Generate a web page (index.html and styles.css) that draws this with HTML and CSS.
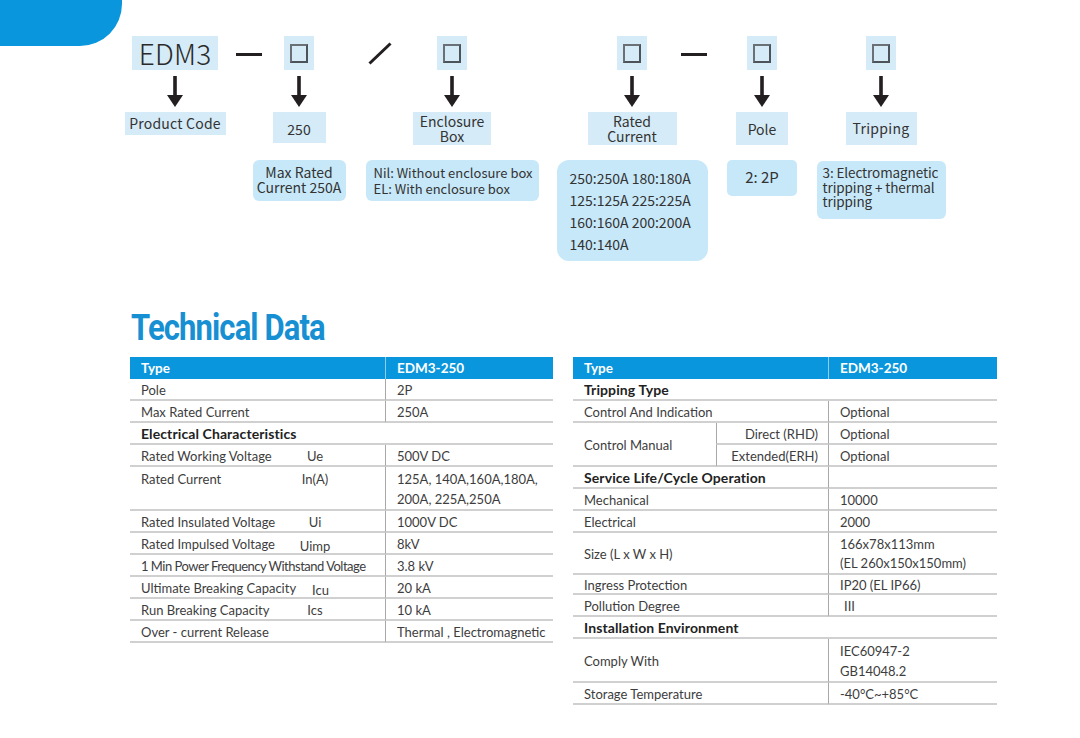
FILE: index.html
```html
<!DOCTYPE html>
<html lang="en">
<head>
<meta charset="utf-8">
<title>EDM3 Technical Data</title>
<link rel="stylesheet" href="styles.css">
</head>
<body>
<div class="page">
  <div class="corner"></div>

  <section class="code">
    <div class="node c1">
      <div class="seg seg-text">EDM3</div>
      <svg class="arrow" viewBox="0 0 16 31"><rect x="6.2" y="0" width="3.6" height="21"/><polygon points="0,19 16,19 8,31"/></svg>
      <div class="label-area"><div class="label l-code">Product Code</div></div>
    </div>
    <div class="sep s1"><span class="dash"></span></div>
    <div class="node c2">
      <div class="seg"><span class="sq"></span></div>
      <svg class="arrow" viewBox="0 0 16 31"><rect x="6.2" y="0" width="3.6" height="21"/><polygon points="0,19 16,19 8,31"/></svg>
      <div class="label-area"><div class="label l-250">250</div></div>
      <div class="desc d-max">Max Rated<br>Current 250A</div>
    </div>
    <div class="sep s2"><svg class="slash" viewBox="0 0 24 23"><line x1="1.5" y1="21.5" x2="22.5" y2="1.5"/></svg></div>
    <div class="node c3">
      <div class="seg"><span class="sq"></span></div>
      <svg class="arrow" viewBox="0 0 16 31"><rect x="6.2" y="0" width="3.6" height="21"/><polygon points="0,19 16,19 8,31"/></svg>
      <div class="label-area"><div class="label l-two l-encl">Enclosure<br>Box</div></div>
      <div class="desc d-nil">Nil: Without enclosure box<br>EL: With enclosure box</div>
    </div>
    <div class="node c4">
      <div class="seg"><span class="sq"></span></div>
      <svg class="arrow" viewBox="0 0 16 31"><rect x="6.2" y="0" width="3.6" height="21"/><polygon points="0,19 16,19 8,31"/></svg>
      <div class="label-area"><div class="label l-two l-rated">Rated<br>Current</div></div>
      <div class="desc d-list">250:250A 180:180A<br>125:125A 225:225A<br>160:160A 200:200A<br>140:140A</div>
    </div>
    <div class="sep s3"><span class="dash"></span></div>
    <div class="node c5">
      <div class="seg"><span class="sq"></span></div>
      <svg class="arrow" viewBox="0 0 16 31"><rect x="6.2" y="0" width="3.6" height="21"/><polygon points="0,19 16,19 8,31"/></svg>
      <div class="label-area"><div class="label l-pole">Pole</div></div>
      <div class="desc d-pole">2: 2P</div>
    </div>
    <div class="node c6">
      <div class="seg"><span class="sq"></span></div>
      <svg class="arrow" viewBox="0 0 16 31"><rect x="6.2" y="0" width="3.6" height="21"/><polygon points="0,19 16,19 8,31"/></svg>
      <div class="label-area"><div class="label l-trip">Tripping</div></div>
      <div class="desc d-trip">3: Electromagnetic<br>tripping + thermal<br>tripping</div>
    </div>
  </section>

  <h1 class="title">Technical Data</h1>

  <section class="tables">
    <table class="spec">
      <colgroup><col class="cl-l"><col class="cl-r"></colgroup>
      <tr class="head"><td>Type</td><td class="v">EDM3-250</td></tr>
      <tr><td>Pole</td><td class="v">2P</td></tr>
      <tr><td>Max Rated Current</td><td class="v">250A</td></tr>
      <tr class="group"><td colspan="2">Electrical Characteristics</td></tr>
      <tr><td><div class="pair"><span>Rated Working Voltage</span><span class="sym">Ue</span></div></td><td class="v">500V DC</td></tr>
      <tr class="tall"><td class="top"><div class="pair"><span>Rated Current</span><span class="sym">In(A)</span></div></td><td class="v">125A, 140A,160A,180A,<br>200A, 225A,250A</td></tr>
      <tr><td><div class="pair"><span>Rated Insulated Voltage</span><span class="sym">Ui</span></div></td><td class="v">1000V DC</td></tr>
      <tr><td><div class="pair"><span>Rated Impulsed Voltage</span><span class="sym sym-low">Uimp</span></div></td><td class="v">8kV</td></tr>
      <tr><td><span class="squeeze">1 Min Power Frequency Withstand Voltage</span></td><td class="v">3.8 kV</td></tr>
      <tr><td><div class="pair"><span>Ultimate Breaking Capacity</span><span class="sym sym-low">Icu</span></div></td><td class="v">20 kA</td></tr>
      <tr><td><div class="pair"><span>Run Breaking Capacity</span><span class="sym">Ics</span></div></td><td class="v">10 kA</td></tr>
      <tr><td>Over - current Release</td><td class="v">Thermal , Electromagnetic</td></tr>
    </table>

    <table class="spec">
      <colgroup><col class="cr-a"><col class="cr-b"><col class="cr-c"></colgroup>
      <tr class="head"><td colspan="2">Type</td><td class="v">EDM3-250</td></tr>
      <tr class="group"><td colspan="3">Tripping Type</td></tr>
      <tr><td colspan="2">Control And Indication</td><td class="v">Optional</td></tr>
      <tr><td rowspan="2" class="mid">Control Manual</td><td class="sub">Direct (RHD)</td><td class="v">Optional</td></tr>
      <tr><td class="sub">Extended(ERH)</td><td class="v">Optional</td></tr>
      <tr class="group"><td colspan="2">Service Life/Cycle Operation</td><td class="v"></td></tr>
      <tr><td colspan="2">Mechanical</td><td class="v">10000</td></tr>
      <tr><td colspan="2">Electrical</td><td class="v">2000</td></tr>
      <tr class="tall snug"><td colspan="2" class="mid">Size (L x W x H)</td><td class="v">166x78x113mm<br>(EL 260x150x150mm)</td></tr>
      <tr class="short"><td colspan="2">Ingress Protection</td><td class="v">IP20 (EL IP66)</td></tr>
      <tr><td colspan="2">Pollution Degree</td><td class="v"><span class="roman">III</span></td></tr>
      <tr class="group"><td colspan="3">Installation Environment</td></tr>
      <tr class="tall"><td colspan="2" class="mid">Comply With</td><td class="v">IEC60947-2<br>GB14048.2</td></tr>
      <tr><td colspan="2">Storage Temperature</td><td class="v">-40°C~+85°C</td></tr>
    </table>
  </section>
</div>
</body>
</html>
```

FILE: styles.css
```css
* { box-sizing: border-box; }

body {
  margin: 0;
  background: #ffffff;
  color: #333333;
  font-family: "Noto Sans", "Liberation Sans", sans-serif;
}

.page {
  position: relative;
  width: 1080px;
  height: 738px;
  overflow: hidden;
  background: #ffffff;
}

/* decorative blue corner tab */
.corner {
  position: absolute;
  left: 0;
  top: 0;
  width: 122px;
  height: 46px;
  background: #0a96dc;
  border-bottom-right-radius: 42px;
}

/* ---------- ordering code diagram ---------- */
.code {
  display: flex;
  align-items: flex-start;
  height: 300px;
  padding: 36px 0 0 120px;
  font-family: "Noto Sans CJK SC", "Noto Sans", sans-serif;
  color: #333333;
}

.node {
  flex: none;
  display: flex;
  flex-direction: column;
  align-items: center;
}

.c1 { width: 110px; }
.c2 { width: 62px; }
.c3 { width: 44px; }
.c4 { width: 60px; margin-left: 128px; }
.c5 { width: 72px; }
.c6 { width: 58px; margin-left: 54px; }

.sep {
  flex: none;
  height: 34px;
  display: flex;
  align-items: center;
  justify-content: center;
}
.s1 { width: 38px; }
.s2 { width: 100px; }
.s3 { width: 64px; }

.dash {
  display: block;
  width: 26px;
  height: 3px;
  margin-top: 2px;
  background: #231f20;
}

.slash {
  width: 24px;
  height: 23px;
  margin-top: 1px;
}
.slash line {
  stroke: #231f20;
  stroke-width: 3;
}

.seg {
  flex: none;
  width: 30px;
  height: 34px;
  background: #d5ebf7;
  display: flex;
  align-items: center;
  justify-content: center;
}

.seg-text {
  width: 86px;
  font-size: 28px;
  line-height: 34px;
  font-weight: 300;
  letter-spacing: 0.2px;
  color: #2a2a2a;
}

.sq {
  display: block;
  width: 18px;
  height: 19px;
  margin-top: 1px;
  border: 2px solid #4d5459;
  border-top-color: #6a7076;
  border-left-color: #6a7076;
}

.arrow {
  flex: none;
  width: 16px;
  height: 31px;
  margin-top: 6px;
  fill: #231f20;
}

.label-area {
  flex: none;
  height: 53px;
  padding-top: 5px;
  display: flex;
  justify-content: center;
}

.label {
  flex: none;
  background: #d5ebf7;
  font-size: 14px;
  line-height: 15px;
  text-align: center;
  color: #333333;
  display: flex;
  align-items: center;
  justify-content: center;
  white-space: nowrap;
  height: 33px;
}
.l-code { width: 101px; height: 23px; letter-spacing: 0.2px; }
.l-250 { width: 53px; height: 31px; padding-top: 3px; }
.l-encl { width: 78px; }
.l-rated { width: 89px; }
.l-pole { width: 52px; padding-top: 2px; }
.l-trip { width: 71px; letter-spacing: 0.3px; }
.l-two { align-items: flex-start; padding-top: 2px; }

.desc {
  flex: none;
  background: #c7e8f9;
  font-size: 14px;
  line-height: 15px;
  color: #333333;
  white-space: nowrap;
}
.d-max {
  width: 93px;
  height: 41px;
  border-radius: 6px;
  text-align: center;
  padding-top: 5px;
}
.d-nil {
  width: 173px;
  height: 41px;
  border-radius: 6px;
  padding: 5px 0 0 8px;
  font-size: 13px;
  line-height: 16px;
}
.d-list {
  width: 151px;
  height: 101px;
  border-radius: 12px;
  padding: 7px 0 0 13px;
  line-height: 22px;
}
.d-pole {
  width: 70px;
  height: 36px;
  border-radius: 5px;
  text-align: center;
  font-size: 15px;
  line-height: 20px;
  padding-top: 7px;
}
.d-trip {
  width: 129px;
  height: 58px;
  margin-top: 1px;
  border-radius: 6px;
  padding: 4px 0 0 6px;
  font-size: 13.5px;
  line-height: 14.6px;
  letter-spacing: -0.1px;
}

/* ---------- title ---------- */
.title {
  margin: 8px 0 0 131px;
  height: 49px;
  font-family: "Roboto", "Liberation Sans", sans-serif;
  font-weight: 700;
  font-size: 36px;
  line-height: 40px;
  letter-spacing: -1px;
  color: #1790d3;
  transform: scaleX(0.86);
  transform-origin: left center;
  white-space: nowrap;
}

/* ---------- spec tables ---------- */
.tables {
  display: flex;
  align-items: flex-start;
  gap: 20px;
  padding-left: 130px;
}

.spec {
  border-collapse: separate;
  border-spacing: 0;
  table-layout: fixed;
  font-family: "Lato", "Liberation Sans", sans-serif;
  font-weight: 400;
  font-size: 13px;
  color: #3d3d3d;
}
.spec:first-child { width: 423px; }
.spec:last-child { width: 424px; }

.cl-l { width: 255px; }
.cl-r { width: 168px; }
.cr-a { width: 143px; }
.cr-b { width: 112px; }
.cr-c { width: 169px; }

.spec td {
  padding: 2px 0 0 11px;
  line-height: 18px;
  border-bottom: 2px solid #d0d0d0;
  white-space: nowrap;
  vertical-align: middle;
}
.spec td.v {
  padding-left: 11px;
  border-left: 1px solid #a8a8a8;
}

.spec tr.tall td { line-height: 20px; }
.spec tr.snug td { line-height: 19px; }
.spec tr.short td { line-height: 16px; }
.spec td.top { vertical-align: top; }
.spec td.mid { vertical-align: middle; }

.spec tr.head td {
  background: #0a96dc;
  color: #ffffff;
  font-weight: 700;
  font-size: 13.5px;
  padding-top: 0;
  line-height: 22px;
  border-bottom: 0;
}
.spec tr.head td.v { border-left: 1px solid #8fcdee; }

.spec tr.group td {
  font-weight: 700;
  font-size: 14px;
  letter-spacing: 0.1px;
  color: #222222;
}

.spec td.sub {
  text-align: right;
  padding: 2px 10px 0 0;
  border-left: 1px solid #a8a8a8;
}

.pair {
  display: flex;
  justify-content: space-between;
}
.sym {
  width: 60px;
  margin-right: 40px;
  text-align: center;
}
.sym-low { position: relative; top: 2px; }

.squeeze {
  letter-spacing: -0.5px;
}

.roman {
  padding-left: 4px;
}
```
